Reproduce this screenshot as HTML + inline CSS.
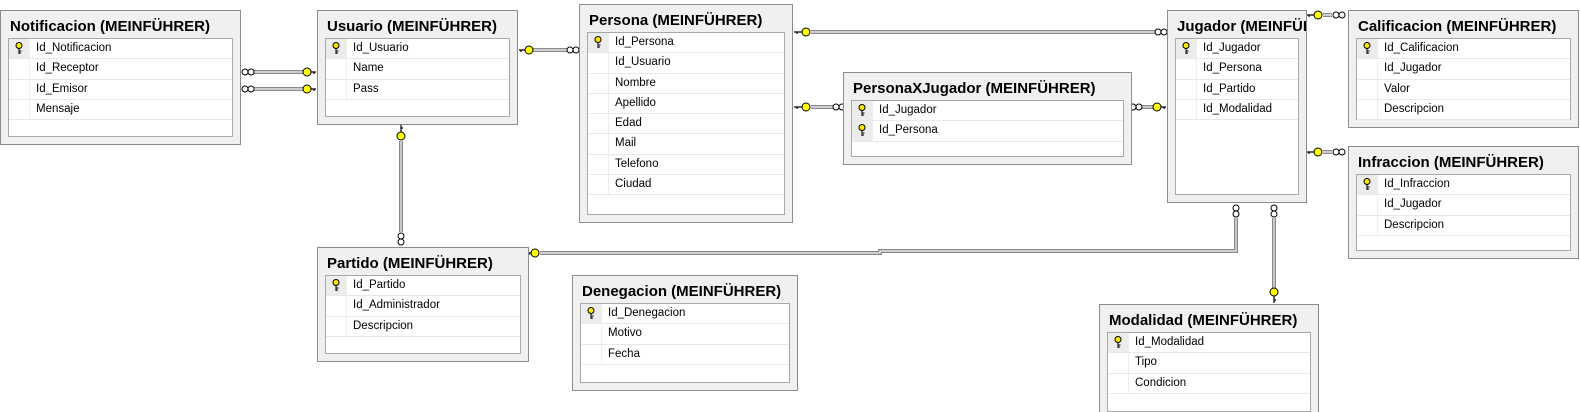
<!DOCTYPE html>
<html><head><meta charset="utf-8"><style>
html,body{margin:0;padding:0;background:#fff;width:1580px;height:412px;overflow:hidden;position:relative;font-family:"Liberation Sans",Tahoma,sans-serif}
.t{position:absolute;background:#f0f0f0;border:1px solid #8c8c8c;box-sizing:border-box;overflow:hidden}
.t .h{position:absolute;left:9px;top:6px;font-weight:bold;font-size:15px;line-height:20px;white-space:nowrap;color:#000}
.g{position:absolute;left:7px;right:7px;top:27px;bottom:7px;background:#fff;border:1px solid #a8a8a8}
.r{height:20.3px;border-bottom:1px solid #e8e8e8;position:relative;box-sizing:border-box}
.r .k{position:absolute;left:0;top:0;bottom:0;width:20px;border-right:1px solid #eeeeee}
.r .k.p{background:#ececec}
.r .k svg{position:absolute;left:6px;top:3px}
.r span{position:absolute;left:27px;top:3px;font-size:11.5px;color:#000;white-space:nowrap}
svg.c{position:absolute;left:0;top:0}
</style></head><body>

<svg class="c" width="1580" height="412">
<g fill="none" stroke-linecap="butt">
<g stroke="#8a8a8a" stroke-width="4">
<path d="M253 72H303M253 89H303"/>
<path d="M533 50H567"/>
<path d="M401 141V232"/>
<path d="M811 32H1155"/>
<path d="M811 107H833"/>
<path d="M1142 107H1153"/>
<path d="M1323 15H1332M1323 152H1332"/>
<path d="M540 253H880V251H1236V218"/>
<path d="M1274 218V288"/>
</g>
<g stroke="#e4e4e4" stroke-width="1.4">
<path d="M253 72H303M253 89H303"/>
<path d="M533 50H567"/>
<path d="M401 141V232"/>
<path d="M811 32H1155"/>
<path d="M811 107H833"/>
<path d="M1142 107H1153"/>
<path d="M1323 15H1332M1323 152H1332"/>
<path d="M540 253H880V251H1236V218"/>
<path d="M1274 218V288"/>
</g>
</g>
<g fill="#fff" stroke="#000" stroke-width="1">
<circle cx="245" cy="72" r="3"/><circle cx="251" cy="72" r="3"/>
<circle cx="245" cy="89" r="3"/><circle cx="251" cy="89" r="3"/>
<circle cx="570" cy="50" r="3"/><circle cx="576" cy="50" r="3"/>
<circle cx="401" cy="236" r="3"/><circle cx="401" cy="242" r="3"/>
<circle cx="1158" cy="32" r="3"/><circle cx="1164" cy="32" r="3"/>
<circle cx="836" cy="107" r="3"/><circle cx="842" cy="107" r="3"/>
<circle cx="1133" cy="107" r="3"/><circle cx="1139" cy="107" r="3"/>
<circle cx="1336" cy="15" r="3"/><circle cx="1342" cy="15" r="3"/>
<circle cx="1336" cy="152" r="3"/><circle cx="1342" cy="152" r="3"/>
<circle cx="1236" cy="208" r="3"/><circle cx="1236" cy="214" r="3"/>
<circle cx="1274" cy="208" r="3"/><circle cx="1274" cy="214" r="3"/>
</g>
<g fill="#ffff00" stroke="#000" stroke-width="1">
<circle cx="307" cy="72" r="4"/><circle cx="307" cy="89" r="4"/>
<circle cx="529" cy="50" r="4"/>
<circle cx="401" cy="136" r="4"/>
<circle cx="806" cy="32" r="4"/><circle cx="806" cy="107" r="4"/>
<circle cx="1157" cy="107" r="4"/>
<circle cx="1318" cy="15" r="4"/><circle cx="1318" cy="152" r="4"/>
<circle cx="535" cy="253" r="4"/>
<circle cx="1274" cy="292" r="4"/>
</g>
<g stroke="#000" stroke-width="1.2" fill="none">
<path d="M311 72H316M314 72V74M311 89H316M314 89V91"/>
<path d="M519 50H525M521 50V52"/>
<path d="M401 125V132M401 128H403"/>
<path d="M794 32H802M797 32V34M794 107H802M797 107V109"/>
<path d="M1161 107H1166M1164 107V109"/>
<path d="M1307 15H1314M1309 15V17M1307 152H1314M1309 152V154"/>
<path d="M528 253H531M529 253V255"/>
<path d="M1274 296V303M1274 300H1276"/>
</g>
</svg>

<div class="t" style="left:0;top:10px;width:241px;height:135px"><div class="h">Notificacion (MEINFÜHRER)</div>
<div class="g">
<div class="r"><div class="k p"><svg width="8" height="13"><circle cx="4" cy="3.5" r="3" fill="#ffe800" stroke="#000"/><path d="M4 6.5V12M4 9H6.5M4 11H6" stroke="#000" fill="none"/></svg></div><span>Id_Notificacion</span></div>
<div class="r"><div class="k"></div><span>Id_Receptor</span></div>
<div class="r"><div class="k"></div><span>Id_Emisor</span></div>
<div class="r"><div class="k"></div><span>Mensaje</span></div>
</div></div>

<div class="t" style="left:317px;top:10px;width:201px;height:115px"><div class="h">Usuario (MEINFÜHRER)</div>
<div class="g">
<div class="r"><div class="k p"><svg width="8" height="13"><circle cx="4" cy="3.5" r="3" fill="#ffe800" stroke="#000"/><path d="M4 6.5V12M4 9H6.5M4 11H6" stroke="#000" fill="none"/></svg></div><span>Id_Usuario</span></div>
<div class="r"><div class="k"></div><span>Name</span></div>
<div class="r"><div class="k"></div><span>Pass</span></div>
</div></div>

<div class="t" style="left:579px;top:4px;width:214px;height:219px"><div class="h">Persona (MEINFÜHRER)</div>
<div class="g">
<div class="r"><div class="k p"><svg width="8" height="13"><circle cx="4" cy="3.5" r="3" fill="#ffe800" stroke="#000"/><path d="M4 6.5V12M4 9H6.5M4 11H6" stroke="#000" fill="none"/></svg></div><span>Id_Persona</span></div>
<div class="r"><div class="k"></div><span>Id_Usuario</span></div>
<div class="r"><div class="k"></div><span>Nombre</span></div>
<div class="r"><div class="k"></div><span>Apellido</span></div>
<div class="r"><div class="k"></div><span>Edad</span></div>
<div class="r"><div class="k"></div><span>Mail</span></div>
<div class="r"><div class="k"></div><span>Telefono</span></div>
<div class="r"><div class="k"></div><span>Ciudad</span></div>
</div></div>

<div class="t" style="left:843px;top:72px;width:289px;height:93px"><div class="h">PersonaXJugador (MEINFÜHRER)</div>
<div class="g">
<div class="r"><div class="k p"><svg width="8" height="13"><circle cx="4" cy="3.5" r="3" fill="#ffe800" stroke="#000"/><path d="M4 6.5V12M4 9H6.5M4 11H6" stroke="#000" fill="none"/></svg></div><span>Id_Jugador</span></div>
<div class="r"><div class="k p"><svg width="8" height="13"><circle cx="4" cy="3.5" r="3" fill="#ffe800" stroke="#000"/><path d="M4 6.5V12M4 9H6.5M4 11H6" stroke="#000" fill="none"/></svg></div><span>Id_Persona</span></div>
</div></div>

<div class="t" style="left:1167px;top:10px;width:140px;height:193px"><div class="h">Jugador (MEINFÜHRER)</div>
<div class="g">
<div class="r"><div class="k p"><svg width="8" height="13"><circle cx="4" cy="3.5" r="3" fill="#ffe800" stroke="#000"/><path d="M4 6.5V12M4 9H6.5M4 11H6" stroke="#000" fill="none"/></svg></div><span>Id_Jugador</span></div>
<div class="r"><div class="k"></div><span>Id_Persona</span></div>
<div class="r"><div class="k"></div><span>Id_Partido</span></div>
<div class="r"><div class="k"></div><span>Id_Modalidad</span></div>
</div></div>

<div class="t" style="left:1348px;top:10px;width:231px;height:118px"><div class="h">Calificacion (MEINFÜHRER)</div>
<div class="g">
<div class="r"><div class="k p"><svg width="8" height="13"><circle cx="4" cy="3.5" r="3" fill="#ffe800" stroke="#000"/><path d="M4 6.5V12M4 9H6.5M4 11H6" stroke="#000" fill="none"/></svg></div><span>Id_Calificacion</span></div>
<div class="r"><div class="k"></div><span>Id_Jugador</span></div>
<div class="r"><div class="k"></div><span>Valor</span></div>
<div class="r"><div class="k"></div><span>Descripcion</span></div>
</div></div>

<div class="t" style="left:1348px;top:146px;width:231px;height:113px"><div class="h">Infraccion (MEINFÜHRER)</div>
<div class="g">
<div class="r"><div class="k p"><svg width="8" height="13"><circle cx="4" cy="3.5" r="3" fill="#ffe800" stroke="#000"/><path d="M4 6.5V12M4 9H6.5M4 11H6" stroke="#000" fill="none"/></svg></div><span>Id_Infraccion</span></div>
<div class="r"><div class="k"></div><span>Id_Jugador</span></div>
<div class="r"><div class="k"></div><span>Descripcion</span></div>
</div></div>

<div class="t" style="left:317px;top:247px;width:212px;height:115px"><div class="h">Partido (MEINFÜHRER)</div>
<div class="g">
<div class="r"><div class="k p"><svg width="8" height="13"><circle cx="4" cy="3.5" r="3" fill="#ffe800" stroke="#000"/><path d="M4 6.5V12M4 9H6.5M4 11H6" stroke="#000" fill="none"/></svg></div><span>Id_Partido</span></div>
<div class="r"><div class="k"></div><span>Id_Administrador</span></div>
<div class="r"><div class="k"></div><span>Descripcion</span></div>
</div></div>

<div class="t" style="left:572px;top:275px;width:226px;height:116px"><div class="h">Denegacion (MEINFÜHRER)</div>
<div class="g">
<div class="r"><div class="k p"><svg width="8" height="13"><circle cx="4" cy="3.5" r="3" fill="#ffe800" stroke="#000"/><path d="M4 6.5V12M4 9H6.5M4 11H6" stroke="#000" fill="none"/></svg></div><span>Id_Denegacion</span></div>
<div class="r"><div class="k"></div><span>Motivo</span></div>
<div class="r"><div class="k"></div><span>Fecha</span></div>
</div></div>

<div class="t" style="left:1099px;top:304px;width:220px;height:116px"><div class="h">Modalidad (MEINFÜHRER)</div>
<div class="g">
<div class="r"><div class="k p"><svg width="8" height="13"><circle cx="4" cy="3.5" r="3" fill="#ffe800" stroke="#000"/><path d="M4 6.5V12M4 9H6.5M4 11H6" stroke="#000" fill="none"/></svg></div><span>Id_Modalidad</span></div>
<div class="r"><div class="k"></div><span>Tipo</span></div>
<div class="r"><div class="k"></div><span>Condicion</span></div>
</div></div>

</body></html>
